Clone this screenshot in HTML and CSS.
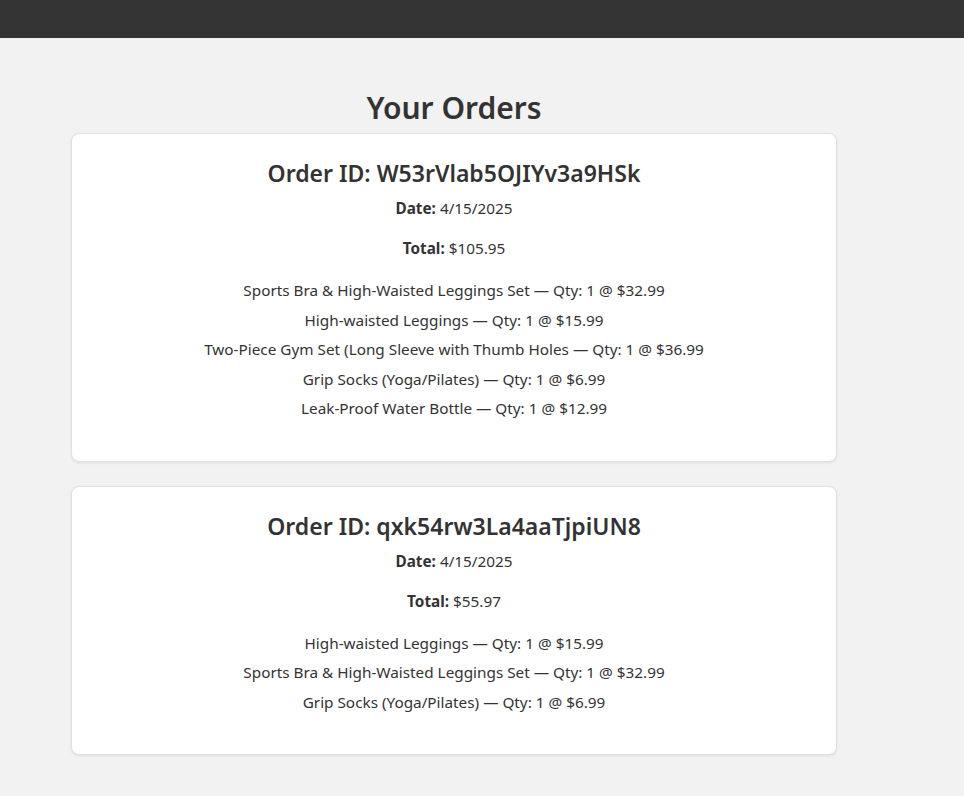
FILE: index.html
```html
<!DOCTYPE html>
<html lang="en">
<head>
<meta charset="utf-8">
<title>Your Orders</title>
<link rel="stylesheet" href="styles.css">
</head>
<body>
<header class="topbar"></header>
<main class="page">
  <div class="container">
    <h1 class="page-title">Your Orders</h1>
    <section class="order-card">
      <h2 class="order-id">Order ID: W53rVlab5OJIYv3a9HSk</h2>
      <p class="order-meta"><strong>Date:</strong> 4/15/2025</p>
      <p class="order-meta order-total"><strong>Total:</strong> $105.95</p>
      <ul class="order-items">
        <li>Sports Bra &amp; High-Waisted Leggings Set — Qty: 1 @ $32.99</li>
        <li>High-waisted Leggings — Qty: 1 @ $15.99</li>
        <li>Two-Piece Gym Set (Long Sleeve with Thumb Holes — Qty: 1 @ $36.99</li>
        <li>Grip Socks (Yoga/Pilates) — Qty: 1 @ $6.99</li>
        <li>Leak-Proof Water Bottle — Qty: 1 @ $12.99</li>
      </ul>
    </section>
    <section class="order-card">
      <h2 class="order-id">Order ID: qxk54rw3La4aaTjpiUN8</h2>
      <p class="order-meta"><strong>Date:</strong> 4/15/2025</p>
      <p class="order-meta order-total"><strong>Total:</strong> $55.97</p>
      <ul class="order-items">
        <li>High-waisted Leggings — Qty: 1 @ $15.99</li>
        <li>Sports Bra &amp; High-Waisted Leggings Set — Qty: 1 @ $32.99</li>
        <li>Grip Socks (Yoga/Pilates) — Qty: 1 @ $6.99</li>
      </ul>
    </section>
  </div>
</main>
</body>
</html>
```
FILE: styles.css
```css
* { box-sizing: border-box; }
html, body {
  margin: 0;
  padding: 0;
  background: #f2f2f2;
  color: #333;
  font-family: "Noto Sans", "Open Sans", sans-serif;
  font-size: 15.3px;
}
.topbar {
  height: 38px;
  background: #333;
}
.page {
  padding-top: 50px;
}
.container {
  width: 766px;
  margin-left: 71px;
}
.page-title {
  margin: 0 0 5px;
  text-align: center;
  font-size: 30px;
  line-height: 40px;
  font-weight: 600;
  color: #333;
}
.order-card {
  background: #fff;
  border: 1px solid #e0e0e0;
  border-radius: 8px;
  box-shadow: 0 1px 3px rgba(0,0,0,0.08);
  padding: 20px 24px;
  margin-bottom: 24px;
  text-align: center;
}
.order-id {
  margin: 4px 0 9px;
  font-size: 23px;
  line-height: 30px;
  font-weight: 600;
}
.order-meta {
  margin: 0;
  line-height: 22px;
}
.order-total {
  margin-top: 18px;
}
.order-items {
  list-style: none;
  margin: 17px 0 17px;
  padding: 0;
}
.order-items li {
  line-height: 29.5px;
}
```
